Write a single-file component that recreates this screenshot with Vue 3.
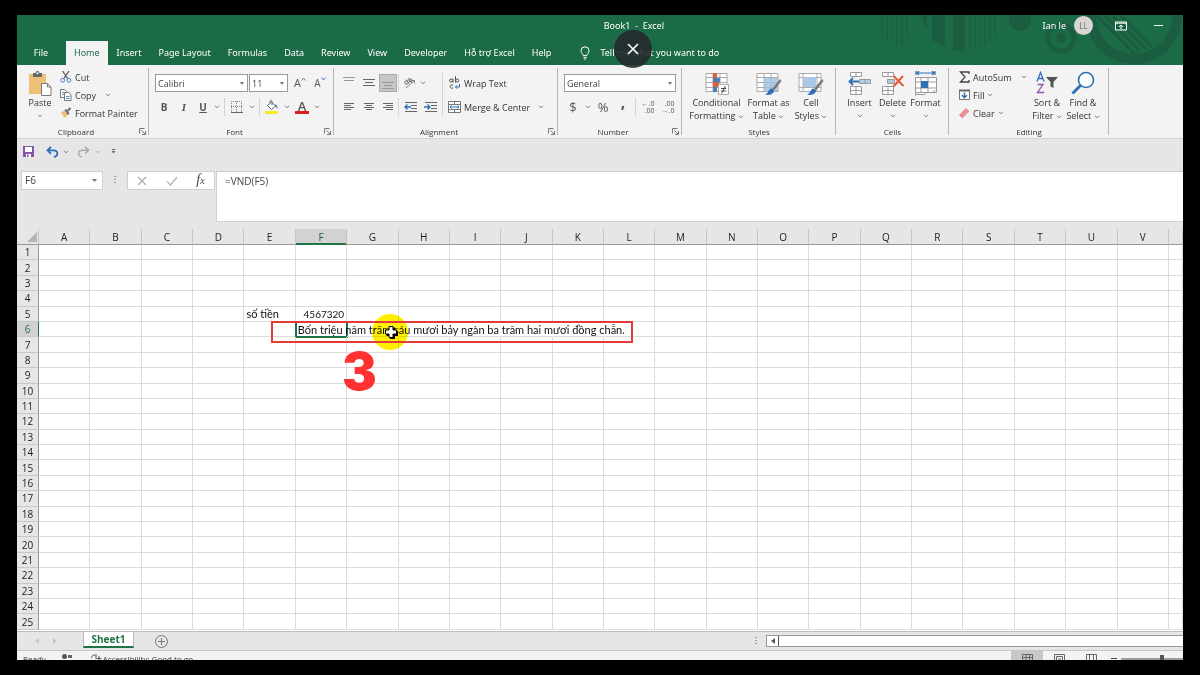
<script setup>
import { h, ref } from 'vue'

const tabs = ['Home', 'Insert', 'Page Layout', 'Formulas', 'Data', 'Review', 'View', 'Developer', 'Hỗ trợ Excel', 'Help']
const columns = 'ABCDEFGHIJKLMNOPQRSTUV'.split('')
const cells = {
  E5: 'số tiền',
  F5: '4567320',
  F6: 'Bốn triệu năm trăm sáu mươi bảy ngàn ba trăm hai mươi đồng chẵn.',
}
const spilled = ['G6', 'H6', 'I6', 'J6', 'K6']
const formula = ref('=VND(F5)')

const Chevron = () =>
  h('svg', { class: 'chevron', width: 6, height: 4, viewBox: '0 0 6 4' }, [
    h('path', { d: 'M1 .8 3 2.8 5 .8', fill: 'none', stroke: '#777', 'stroke-width': 1 }),
  ])
const Launcher = () =>
  h('svg', { width: 7, height: 7, viewBox: '0 0 7 7' }, [
    h('path', { d: 'M.5 5.5V.5h5M2.5 2.5l3.5 3.5M6.5 3v3.5H3', fill: 'none', stroke: '#777' }),
  ])
const Lines = (props) =>
  h('svg', { width: 12, height: 12, viewBox: '0 0 12 12' }, [
    h('path', { d: props.d, fill: 'none', stroke: props.color || '#666' }),
  ])
Lines.props = ['d', 'color']
</script>

<template>
  <div class="screen">
    <div class="window">
      <header class="top">
        <svg class="pattern" width="310" height="50" viewBox="0 0 310 50">
          <g fill="#1b5a40">
            <path d="M8 0h2v22H8zM13 0h2v27h-2zM18 0h2v25h-2zM23 0h2v29h-2zM28 0h2v32h-2zM33 0h2v22h-2z" opacity=".6" />
            <path d="M48 0h6v16zM59 0h13v32l-13-7zM80 0h12v36H80z" />
            <path d="M96 0h2v34h-2zM101 0h2v33h-2zM106 0h2v32h-2zM111 0h2v30h-2zM116 0h2v26h-2zM121 0h2v21h-2z" opacity=".7" />
            <circle cx="147" cy="5" r="11" /><circle cx="188" cy="23" r="5" />
          </g>
          <g fill="none" stroke="#1b5a40">
            <circle cx="188" cy="23" r="13" stroke-width="5" />
            <circle cx="261" cy="1" r="43" stroke-width="10" />
            <path d="M223 0l40 40M231 0l36 36M239 0l34 34M247 0l32 32" stroke-width="3" />
          </g>
        </svg>
        <div class="titlebar">
          <span></span>
          <span class="title">Book1&nbsp; -&nbsp; Excel</span>
          <div class="account">
            <span>Ian le</span>
            <span class="avatar">LL</span>
            <button aria-label="Ribbon display options">
              <svg width="12" height="10" viewBox="0 0 12 10"><path d="M.5 1h11v8H.5zM0 2.2h12M6 8.5V4.2M4 6l2-2 2 2" fill="none" stroke="#fff" /></svg>
            </button>
            <button aria-label="Minimize"><svg width="9" height="10" viewBox="0 0 9 10"><path d="M0 4.5h9" stroke="#fff" /></svg></button>
          </div>
        </div>
        <nav class="tabs">
          <button class="file">File</button>
          <button v-for="t in tabs" :key="t" :class="{ current: t === 'Home' }">{{ t }}</button>
          <button class="tell">
            <svg width="10" height="14" viewBox="0 0 10 14"><path d="M3.2 9.5C3 8 1 7.200 1 4.800a4 4 0 0 1 8 0C9 7.200 7 8 6.800 9.500zM3.300 11.300h3.400M3.800 13h2.400" fill="none" stroke="#fff" /></svg>
            Tell me what you want to do
          </button>
        </nav>
      </header>

      <div class="ribbon">
        <section class="group clipboard">
          <div class="body">
            <button class="big paste">
              <svg width="24" height="25" viewBox="0 0 24 25"><path d="M1 3h17v20H1z" fill="#eebf76" /><path d="M5 2h2.500a2 2 0 0 1 4 0H14v4H5z" fill="#696969" /><circle cx="9.500" cy="2.300" r="1" fill="#fff" /><path d="M13.500 12.500h6l3.500 3.500v8.500h-9.500z" fill="#fff" stroke="#777" /><path d="M19.500 12.500V16H23" fill="none" stroke="#777" /></svg>
              <span>Paste</span><Chevron />
            </button>
            <div class="stack">
              <button>
                <svg width="12" height="12" viewBox="0 0 12 12"><path d="M2.500 0 8 8M9 0 3.500 8" stroke="#5c5c5c" stroke-width="1.300" /><circle cx="2.700" cy="9.300" r="1.900" fill="none" stroke="#4b7fb8" /><circle cx="8.900" cy="9.300" r="1.900" fill="none" stroke="#4b7fb8" /></svg>
                Cut
              </button>
              <button>
                <svg width="12" height="12" viewBox="0 0 12 12"><path d="M.5.5h4l2 2v6h-6z" fill="#fff" stroke="#777" /><path d="M4.500 3.500h4.200l2.300 2.200v5.800H4.500z" fill="#fff" stroke="#777" /><path d="M2 3.500h2M2 5.500h2M6 7.500h3.500M6 9.500h3.500" stroke="#5b8cc0" /></svg>
                Copy <Chevron class="apart" />
              </button>
              <button>
                <svg width="12" height="12" viewBox="0 0 12 12"><path d="M1 5.500 4.500 3 8 8l-3.500 3z" fill="#eebf76" /><path d="M4.500 3 6 2l3.500 4.500L8 8z" fill="#666" /><path d="m7.500 4 3-3" stroke="#666" stroke-width="2" /></svg>
                Format Painter
              </button>
            </div>
          </div>
          <footer>Clipboard<button aria-label="Clipboard settings"><Launcher /></button></footer>
        </section>

        <section class="group font">
          <div class="body rows">
            <div class="row">
              <label class="combo family"><select aria-label="Font"><option>Calibri</option></select></label>
              <label class="combo size"><select aria-label="Font size"><option>11</option></select></label>
              <button class="tool grow">A<svg width="5" height="4" viewBox="0 0 5 4"><path d="M.5 3.500 2.500 1l2 2.500" fill="none" stroke="#4b7fb8" /></svg></button>
              <button class="tool shrink">A<svg width="5" height="4" viewBox="0 0 5 4"><path d="M.5.5 2.500 3l2-2.500" fill="none" stroke="#4b7fb8" /></svg></button>
            </div>
            <div class="row">
              <button class="tool"><b>B</b></button>
              <button class="tool"><b><i class="italic">I</i></b></button>
              <button class="tool narrow"><b><u>U</u></b></button>
              <button class="drop" aria-label="Underline styles"><Chevron /></button>
              <i class="sep"></i>
              <button class="tool" aria-label="Borders">
                <svg width="12" height="12" viewBox="0 0 12 12"><path d="M.5 0v11M5.500 0v11M10.500 0v11M0 .5h11M0 5.500h11" stroke="#888" stroke-dasharray="1 1" /><path d="M0 11.500h12" stroke="#666" /></svg>
              </button>
              <button class="drop" aria-label="More borders"><Chevron /></button>
              <i class="sep"></i>
              <button class="tool" aria-label="Fill color">
                <svg width="14" height="14" viewBox="0 0 14 14"><path d="m2.500 5.500 4-3.500 4 4-4 3.500zM5 3V1.500a1 1 0 0 1 2 0V5" fill="#fff" stroke="#666" /><path d="M10 4.500c2 0 2.500 1.500 2.500 4.500-1-1-1.500-2-2.500-3z" fill="#4b7fb8" /><path d="M0 11h13v3H0z" fill="#f5ec1d" /></svg>
              </button>
              <button class="drop" aria-label="More fill colors"><Chevron /></button>
              <button class="tool fontcolor">A</button>
              <button class="drop" aria-label="More font colors"><Chevron /></button>
            </div>
          </div>
          <footer>Font<button aria-label="Font settings"><Launcher /></button></footer>
        </section>

        <section class="group alignment">
          <div class="body split">
            <div class="rows">
              <div class="row">
                <button class="tool" aria-label="Top align"><Lines d="M0 .5h12M1 3.500h10" color="#999" /></button>
                <button class="tool" aria-label="Middle align"><Lines d="M0 2.500h12M2 5.500h8M0 8.500h12" /></button>
                <button class="tool pressed" aria-label="Bottom align"><Lines d="M0 5.500h12M2 8.500h8M0 11.500h12" color="#999" /></button>
                <i class="sep"></i>
                <button class="tool narrow" aria-label="Orientation">
                  <svg width="13" height="12" viewBox="0 0 13 12"><path d="m3 11 8.500-7.500M8.500 3.500h3v3" fill="none" stroke="#888" /><circle cx="3.500" cy="5.500" r="1.700" fill="none" stroke="#666" /><path d="m3 2.500 3 4M5 1l3.500 4.500" stroke="#666" /><circle cx="7.600" cy="3.400" r="1.500" fill="none" stroke="#666" /></svg>
                </button>
                <button class="drop" aria-label="More orientations"><Chevron /></button>
              </div>
              <div class="row">
                <button class="tool" aria-label="Align left"><Lines d="M1 2.500h10M1 4.500h7M1 6.500h10M1 8.500h7" /></button>
                <button class="tool" aria-label="Center"><Lines d="M1 2.500h10M3 4.500h6M1 6.500h10M3 8.500h6" /></button>
                <button class="tool narrow" aria-label="Align right"><Lines d="M1 2.500h10M4 4.500h7M1 6.500h10M4 8.500h7" /></button>
                <i class="sep"></i>
                <button class="tool" aria-label="Decrease indent">
                  <svg width="13" height="12" viewBox="0 0 13 12"><path d="M1 1.500h12M7 4.500h6M7 7.500h6M1 10.500h12" stroke="#666" /><path d="M7 6H1m2.500-2.500L1 6l2.500 2.500" fill="none" stroke="#2f6fb5" stroke-width="1.300" /></svg>
                </button>
                <button class="tool" aria-label="Increase indent">
                  <svg width="13" height="12" viewBox="0 0 13 12"><path d="M1 1.500h12M7 4.500h6M7 7.500h6M1 10.500h12" stroke="#666" /><path d="M0 6h6M3.500 3.500 6 6 3.500 8.500" fill="none" stroke="#2f6fb5" stroke-width="1.300" /></svg>
                </button>
              </div>
            </div>
            <i class="sep tall"></i>
            <div class="rows">
              <div class="row">
                <button class="wide">
                  <svg class="wrapicon" width="13" height="14" viewBox="0 0 13 14"><circle cx="3" cy="4.500" r="1.500" fill="none" stroke="#555" /><path d="M5 2.500v4M7.500 0v6.500" stroke="#555" /><circle cx="9.300" cy="4.500" r="1.500" fill="none" stroke="#555" /><path d="M5 9.300a1.700 1.700 0 1 0 0 2.600" fill="none" stroke="#555" /><path d="M11.500 8v3H7.500M9 9.300 7.500 11 9 12.700" fill="none" stroke="#2f6fb5" /></svg>
                  Wrap Text
                </button>
              </div>
              <div class="row">
                <button class="wide">
                  <svg width="13" height="12" viewBox="0 0 13 12"><path d="M.5.5h12v11H.5zM.5 3.500h12M.5 8.500h12M6.500.5v3M6.500 8.500v3" fill="#fff" stroke="#777" /><path d="M2 6h9M3.500 4.500 2 6l1.500 1.500M9.500 4.500 11 6 9.500 7.500" fill="none" stroke="#2f6fb5" /></svg>
                  Merge &amp; Center
                </button>
                <button class="drop" aria-label="More merge options"><Chevron /></button>
              </div>
            </div>
          </div>
          <footer>Alignment<button aria-label="Alignment settings"><Launcher /></button></footer>
        </section>

        <section class="group number">
          <div class="body rows">
            <div class="row">
              <label class="combo format"><select aria-label="Number format"><option>General</option></select></label>
            </div>
            <div class="row">
              <button class="tool glyph">$</button>
              <button class="drop" aria-label="More currencies"><Chevron /></button>
              <button class="tool glyph">%</button>
              <button class="tool comma">,</button>
              <i class="sep"></i>
              <button class="tool decimal" aria-label="Increase decimal"><span><em>←</em>.0<br />.00</span></button>
              <button class="tool decimal" aria-label="Decrease decimal"><span>.00<br /><em>→</em>.0</span></button>
            </div>
          </div>
          <footer>Number<button aria-label="Number settings"><Launcher /></button></footer>
        </section>

        <section class="group styles">
          <div class="body">
            <button class="big w55">
              <svg width="24" height="25" viewBox="0 0 24 25"><path d="M1 2.500h21v18H1zM1 6.500h21M1 11.500h21M1 16.500h21M8 2v18M15 2v18" fill="#fff" stroke="#aaa" /><path d="M8 2h4v5H8zM8 11h6v5H8z" fill="#d9603b" /><path d="M8 7h7v4H8zM8 16h4v5H8z" fill="#4b7fb8" /><path d="M13.500 13.500h10v10h-10z" fill="#fff" stroke="#aaa" /><path d="M16 17.500h5M16 20h5M20.500 15l-4 7.500" stroke="#444" /></svg>
              <span>Conditional<br />Formatting <Chevron /></span>
            </button>
            <button class="big w47">
              <svg width="26" height="25" viewBox="0 0 26 25"><path d="M1 2.500h21v18H1zM1 6.500h21M1 11.500h21M1 16.500h21M8 2v18M15 2v18" fill="#fff" stroke="#aaa" /><path d="M8 7h14v13H8z" fill="#9ebfe0" opacity=".8" /><path d="m24 8-8 10 2 1.500L25.500 10z" fill="#777" /><path d="M15.500 17.500c-3 0-3 5-6.500 6 5 1.500 9-1 9-4z" fill="#2f6fb5" /></svg>
              <span>Format as<br />Table <Chevron /></span>
            </button>
            <button class="big w36">
              <svg width="26" height="25" viewBox="0 0 26 25"><path d="M1 2.500h22v18H1zM1 6.500h22M1 16.500h22M5 2v18M19 2v18" fill="#fff" stroke="#aaa" /><path d="M5 6h13v10H5z" fill="#a9c8e6" /><path d="m24 8-8 10 2 1.500L25.500 10z" fill="#777" /><path d="M15.500 17.500c-3 0-3 5-6.500 6 5 1.500 9-1 9-4z" fill="#2f6fb5" /></svg>
              <span>Cell<br />Styles <Chevron /></span>
            </button>
          </div>
          <footer>Styles</footer>
        </section>

        <section class="group cells">
          <div class="body">
            <button class="big w33">
              <svg width="24" height="25" viewBox="0 0 24 25"><path d="M2.500 1.500h11v4h-11zM8 1.500v4M2.500 15.500h11v8h-11zM2.500 19.500h11M8 15.500v8" fill="#fff" stroke="#999" /><path d="M11.500 8.500h11v4h-11zM17 8.500v4" fill="#b3cde6" stroke="#999" /><path d="M11 10.500H1.500M5 7l-3.500 3.500L5 14" fill="none" stroke="#2f6fb5" stroke-width="1.800" /></svg>
              <span>Insert</span><Chevron />
            </button>
            <button class="big w33">
              <svg width="24" height="25" viewBox="0 0 24 25"><path d="M1.500 1.500h11v4h-11zM7 1.500v4M1.500 15.500h11v8h-11zM1.500 19.500h11M7 15.500v8" fill="#fff" stroke="#999" /><path d="M6.500 8.500h7v4h-7z" fill="#b5c4d2" stroke="#999" /><path d="m12.500 5 10 10M22 5 12.500 15.500" stroke="#e0573a" stroke-width="2" /></svg>
              <span>Delete</span><Chevron />
            </button>
            <button class="big w33">
              <svg width="24" height="25" viewBox="0 0 24 25"><path d="M3 2h17M5 0 3 2l2 2M18 0l2 2-2 2M2 0v4M21 0v4" fill="none" stroke="#2f6fb5" stroke-width="1.200" /><path d="M1.500 6.500h21v15h-21zM1.500 11h21M1.500 17h21M7 6.500v15M14 6.500v15M1.500 21.500v3M1.500 23.500h9l2-2h6l3-2" fill="#fff" stroke="#999" /><path d="M7 10h7v7H7z" fill="#2f6fb5" /></svg>
              <span>Format</span><Chevron />
            </button>
          </div>
          <footer>Cells</footer>
        </section>

        <section class="group editing">
          <div class="body">
            <div class="stack">
              <button><svg width="11" height="12" viewBox="0 0 11 12"><path d="M10 3V1H1.500l4.500 5-4.500 5H10V9" fill="none" stroke="#444" stroke-width="1.300" /></svg>AutoSum <Chevron class="apart" /></button>
              <button><svg width="11" height="12" viewBox="0 0 11 12"><path d="M.5 1.500h10v9H.5z" fill="#fff" stroke="#777" /><path d="M0 1.500h11" stroke="#666" stroke-width="2" /><path d="M5.500 3.500v5M3 6.200 5.500 8.700 8 6.200" fill="none" stroke="#2f6fb5" stroke-width="1.500" /></svg>Fill <Chevron /></button>
              <button><svg width="11" height="12" viewBox="0 0 11 12"><path d="m1 7 6-6 3.500 3.200-6 6z" fill="#ee8f98" /><path d="M1 7l3.500 3.200L3.400 11 0 8z" fill="#d8707b" /></svg>Clear <Chevron /></button>
            </div>
            <button class="big w36">
              <svg width="24" height="25" viewBox="0 0 24 25"><path d="m2 10.500 3.500-9 3.500 9M3 7.500h5" fill="none" stroke="#2f6fb5" stroke-width="1.300" /><path d="M2.500 13.500H8L2.500 21.500H9" fill="none" stroke="#8d4fa8" stroke-width="1.300" /><path d="M11 6h12l-4.500 5v6l-3-1.500V11z" fill="#555" /></svg>
              <span>Sort &amp;<br />Filter <Chevron /></span>
            </button>
            <button class="big w36">
              <svg width="24" height="25" viewBox="0 0 24 25"><circle cx="15" cy="9" r="7.500" fill="#fff" stroke="#2f6fb5" stroke-width="1.600" /><path d="m9.500 14.500-8 8" stroke="#2f6fb5" stroke-width="3" /></svg>
              <span>Find &amp;<br />Select <Chevron /></span>
            </button>
          </div>
          <footer>Editing</footer>
        </section>
      </div>

      <div class="quick">
        <button aria-label="Save"><svg width="11" height="11" viewBox="0 0 11 11"><path d="M0 0h11v11H0z" fill="#8755a5" /><path d="M2 1h7v5H2zM3 8h5v3H3z" fill="#fff" /><path d="M4 8.500h1.500V11H4z" fill="#8755a5" /></svg></button>
        <button class="undo" aria-label="Undo"><svg width="13" height="12" viewBox="0 0 13 12"><path d="M5 .8 1.500 4.300 5 7.800M2 4.300h5.500c5 0 5 6 .5 6.700" fill="none" stroke="#2f6fb5" stroke-width="1.800" /></svg></button>
        <button aria-label="Undo history"><Chevron /></button>
        <button class="redo" aria-label="Redo"><svg width="13" height="12" viewBox="0 0 13 12"><path d="M8 .8l3.500 3.500L8 7.800M11 4.300H5.500c-5 0-5 6-.5 6.700" fill="none" stroke="#aaa" stroke-width="1.500" /></svg></button>
        <button class="faded" aria-label="Redo history"><Chevron /></button>
        <button class="custom" aria-label="Customize toolbar"><svg width="5" height="5" viewBox="0 0 5 5"><path d="M1 .5h3" stroke="#666" /><path d="M.5 2h4l-2 2.500z" fill="#666" /></svg></button>
      </div>

      <div class="formulabar">
        <div class="namebox"><input aria-label="Name box" value="F6" /><svg width="5" height="3" viewBox="0 0 5 3"><path d="M0 0h5L2.500 3z" fill="#777" /></svg></div>
        <span class="dots"></span>
        <div class="actions">
          <button aria-label="Cancel"><svg width="10" height="10" viewBox="0 0 10 10"><path d="m1 1 8 8M9 1 1 9" stroke="#aaa" stroke-width="1.200" /></svg></button>
          <button aria-label="Enter"><svg width="12" height="10" viewBox="0 0 12 10"><path d="m1 5.500 3.500 3.500L11 1" fill="none" stroke="#bbb" stroke-width="1.500" /></svg></button>
          <button class="fx" aria-label="Insert function">f<small>x</small></button>
        </div>
        <textarea v-model="formula" aria-label="Formula"></textarea>
      </div>

      <main class="sheet">
        <table>
          <colgroup><col class="rowcol" /><col v-for="c in columns" :key="c" /><col class="partial" /></colgroup>
          <thead>
            <tr>
              <th class="corner"><svg width="10" height="10" viewBox="0 0 10 10"><path d="M10 0v10H0z" fill="#b4b4b4" /></svg></th>
              <th v-for="c in columns" :key="c" :class="{ active: c === 'F' }">{{ c }}</th>
              <th></th>
            </tr>
          </thead>
          <tbody>
            <tr v-for="r in 25" :key="r">
              <th :class="{ active: r === 6 }">{{ r }}</th>
              <td
                v-for="c in columns"
                :key="c"
                :class="{ num: c + r === 'F5', selected: c + r === 'F6', spill: spilled.includes(c + r) }"
              ><span v-if="cells[c + r]">{{ cells[c + r] }}</span></td>
              <td></td>
            </tr>
          </tbody>
        </table>
        <span class="spot"></span>
        <svg class="cursor" width="15" height="15" viewBox="0 0 15 15"><path d="M6 2.500h5v3.500h3v5h-3v3H6v-3H2.500V6H6z" fill="#000" /><path d="M5 1.500h4v3.500h3.500v4H9v3.500H5V9H1.500V5H5z" fill="#fff" stroke="#000" /></svg>
        <span class="frame"></span>
        <span class="step">3</span>
      </main>

      <div class="sheetbar">
        <button aria-label="Previous sheet"><svg width="4" height="6" viewBox="0 0 4 6"><path d="M4 0v6L0 3z" fill="#c4c4c4" /></svg></button>
        <button aria-label="Next sheet"><svg width="4" height="6" viewBox="0 0 4 6"><path d="M0 0v6l4-3z" fill="#c4c4c4" /></svg></button>
        <button class="sheettab">Sheet1</button>
        <button class="add" aria-label="New sheet"><svg width="13" height="13" viewBox="0 0 13 13"><path d="M6.500 3v7M3 6.500h7" stroke="#777" /><circle cx="6.500" cy="6.500" r="6" fill="none" stroke="#777" /></svg></button>
        <span class="dots"></span>
        <div class="scroll"><button aria-label="Scroll left"><svg width="4" height="6" viewBox="0 0 4 6"><path d="M4 0v6L0 3z" fill="#555" /></svg></button></div>
      </div>

      <div class="status">
        <span>Ready</span>
        <svg width="10" height="10" viewBox="0 0 10 10"><circle cx="2.500" cy="2.500" r="2.500" fill="#555" /><path d="M6 1h4v3H6zM0 6h10v4H0z" fill="#666" /></svg>
        <svg width="12" height="12" viewBox="0 0 12 12"><path d="M4 1a5 5 0 0 0 1 10M5 0v5M8 2v5M5.500 4.500h5" fill="none" stroke="#555" /></svg>
        <span class="access">Accessibility: Good to go</span>
        <button class="on" aria-label="Normal view"><svg width="11" height="10" viewBox="0 0 11 10"><path d="M.5.5h10v9H.5zM0 3.500h11M0 6.500h11M4 0v10M7.500 0v10" fill="none" stroke="#666" /></svg></button>
        <button aria-label="Page layout view"><svg width="11" height="10" viewBox="0 0 11 10"><path d="M.5.5h10v9H.5zM2.500 9.500v-7h6v7M4 5h3" fill="none" stroke="#666" /></svg></button>
        <button aria-label="Page break view"><svg width="11" height="10" viewBox="0 0 11 10"><path d="M.5 9.500v-9h10v9M3.500 0v10M7.500 0v10" fill="none" stroke="#666" /></svg></button>
        <svg class="zoombar" width="72" height="10" viewBox="0 0 72 10"><path d="M0 4.500h6M10 5h62" stroke="#444" /><path d="M49 1h4v8h-4z" fill="#555" /></svg>
      </div>

      <button class="close" aria-label="Close"><svg width="12" height="12" viewBox="0 0 12 12"><path d="m1 1 10 10M11 1 1 11" stroke="#fff" stroke-width="1.600" /></svg></button>
    </div>
  </div>
</template>

<style>
body { background: #000; }
</style>

<style scoped>
* { box-sizing: border-box; }
.screen { height: 100vh; padding: 15px 17px; background: #000; font: 9px/13px "Open Sans", "Noto Sans", sans-serif; color: #333; }
.window { position: relative; height: 100%; display: flex; flex-direction: column; background: #e6e6e6; overflow: hidden; }
button { font: inherit; color: inherit; background: none; border: 0; padding: 0; margin: 0; white-space: nowrap; }
svg { flex: none; display: block; }

.top { position: relative; flex: none; background: #1c6b47; color: #fff; font-family: "Noto Sans", sans-serif; }
.pattern { position: absolute; right: 0; top: 0; opacity: .8; }
.titlebar { position: relative; display: grid; grid-template-columns: 1fr auto 519px; align-items: center; height: 21px; margin-bottom: 5px; }
.account { display: flex; align-items: center; justify-content: flex-end; padding-right: 20px; }
.avatar { width: 19px; height: 19px; line-height: 19px; margin: 0 22px 0 8px; border-radius: 50%; background: #d9d5d5; color: #777; text-align: center; font-size: 8px; }
.account button + button { margin-left: 27px; }
.tabs { position: relative; display: flex; height: 24px; }
.tabs button { padding: 0 8px 1px; margin-right: 1px; }
.tabs .file { width: 48px; }
.tabs .current { background: #f3f3f3; color: #1c6b47; }
.tabs .tell { display: flex; align-items: center; gap: 10px; margin-left: 12px; }

.ribbon { flex: none; display: flex; background: #f3f3f3; border-bottom: 1px solid #d2d2d2; }
.group { position: relative; display: flex; flex-direction: column; height: 73px; }
.group::after { content: ""; position: absolute; right: 0; top: 3px; bottom: 3px; width: 1px; background: #b8b8b8; }
.clipboard { width: 132px; }
.font { width: 185px; }
.alignment { width: 224px; }
.number { width: 124px; }
.styles { width: 154px; }
.cells { width: 113px; }
.editing { width: 160px; }
.body { flex: 1; display: flex; }
.group footer { display: flex; justify-content: center; align-items: center; height: 13px; font-size: 8px; padding-right: 14px; position: relative; }
.group footer button { position: absolute; right: 3px; top: 3px; }
.styles footer, .cells footer, .editing footer { padding-right: 0; }
.big { display: flex; flex-direction: column; align-items: center; padding-top: 6px; align-self: flex-start; text-align: center; }
.big > .chevron { margin-top: 5px; }
.big span .chevron { display: inline-block; vertical-align: middle; }
.paste { width: 46px; }
.w55 { width: 55px; }
.w47 { width: 49px; }
.w36 { width: 36px; }
.w33 { width: 33px; }
.styles .body, .cells .body { justify-content: center; }
.stack { display: flex; flex-direction: column; padding-top: 3px; }
.stack button { display: flex; align-items: center; gap: 3px; height: 18px; }
.clipboard .stack { margin-left: -3px; }
.apart { margin-left: 6px; }
.editing .stack { width: 80px; padding-left: 10px; }
.rows { display: flex; flex-direction: column; gap: 6px; padding-top: 9px; }
.body.rows { padding-left: 5px; }
.row { display: flex; align-items: center; height: 18px; }
.split { padding-left: 5px; }
.split .rows:first-child { width: 103px; }
.tool { width: 20px; height: 18px; display: flex; align-items: center; justify-content: center; font-size: 10px; color: #555; }
.row .narrow { width: 18px; }
.pressed { width: 18px; background: #c6c6c6; border: 1px solid #aaa; }
.drop { width: 10px; height: 18px; display: flex; align-items: center; justify-content: center; }
.sep { width: 1px; height: 18px; background: #d4d4d4; margin: 0 2px; }
.split .sep { margin: 0 1px; }
.split .tall { height: 44px; margin: 8px 5px 0 0; }
.italic { font-family: "Liberation Serif", serif; font-style: italic; font-size: 11px; }
.combo { display: flex; position: relative; height: 18px; margin-left: 1px; }
.combo::after { content: ""; position: absolute; right: 4px; top: 8px; border: 2px solid transparent; border-top: 3px solid #777; border-bottom: 0; }
select { appearance: none; width: 100%; height: 18px; border: 1px solid #999; border-radius: 0; background: #fff; color: #444; font: inherit; padding: 0 2px; }
.family { width: 93px; }
.size { width: 39px; }
.format { width: 112px; }
.grow, .shrink { align-items: flex-start; line-height: 18px; }
.grow { margin-left: 2px; font-size: 11px; }
.grow svg, .shrink svg { margin-top: 3px; }
.fontcolor { font-size: 13px; font-weight: 600; line-height: 12px; width: 14px; margin: 0 3px; height: 14px; border-bottom: 3px solid #d8201f; }
.wide { display: flex; align-items: center; gap: 3px; }
.alignment .wide + .drop { margin-left: 6px; }
.glyph { font-size: 13px; }
.comma { font-size: 16px; font-weight: 700; line-height: 8px; align-items: flex-start; }
.decimal { font-size: 7px; line-height: 7px; text-align: right; }
.decimal em { color: #2f6fb5; font-style: normal; font-weight: 700; }

.quick { flex: none; display: flex; align-items: center; height: 26px; padding: 0 0 1px 6px; }
.undo { margin: 0 4px 0 12px; }
.redo { margin: 0 5px 0 8px; }
.faded { opacity: .5; }
.custom { margin-left: 10px; }

.formulabar { flex: none; display: flex; align-items: flex-start; height: 51px; margin-top: 6px; padding-left: 4px; }
.namebox { display: flex; align-items: center; width: 82px; height: 19px; background: #fff; border: 1px solid #d0d0d0; padding-right: 5px; }
.namebox input { flex: 1; min-width: 0; border: 0; padding: 0 3px; font: inherit; font-size: 10px; color: #444; background: none; }
.dots { width: 2px; height: 9px; background: repeating-linear-gradient(#999 0 1px, transparent 1px 3px); }
.formulabar .dots { margin: 5px 11px 0; }
.actions { display: flex; align-items: center; justify-content: space-around; width: 88px; height: 19px; background: #fff; border: 1px solid #d0d0d0; margin-right: 1px; }
.fx { font: italic 14px/14px "Liberation Serif", serif; color: #444; }
.fx small { font-size: 10px; }
textarea { flex: 1; align-self: stretch; resize: none; border: 1px solid #d0d0d0; border-right: 0; background: #fff; font: inherit; font-size: 10px; padding: 3px 8px; color: #444; border-radius: 0; outline: 0; }

.sheet { position: relative; flex: 1; min-height: 0; background: #fff; margin-top: 7px; overflow: hidden; border-bottom: 1px solid #bbb; }
table { width: 100%; height: calc(100% - 1px); table-layout: fixed; border-collapse: separate; border-spacing: 0; }
.rowcol { width: 22px; }
.partial { width: 14px; }
th { background: #e6e6e6; font-weight: 400; font-size: 10px; line-height: 12px; padding: 0; color: #222; text-align: center; border-right: 1px solid #c4c4c4; }
thead th { height: 16px; border-bottom: 1px solid #999; }
tbody th { border-bottom: 1px solid #c8c8c8; border-right-color: #999; }
.corner svg { margin-left: 10px; }
thead .active { background: #d2d2d2; color: #1c5a45; border-bottom-color: #217346; box-shadow: inset 0 -1px #217346; }
tbody .active { background: #d2d2d2; color: #217346; border-right-color: #217346; }
td { padding: 0 2px; border-right: 1px solid #dcdcdc; border-bottom: 1px solid #dcdcdc; font: 11px/12px Lato, "Open Sans", sans-serif; color: #111; white-space: nowrap; }
.num { text-align: right; font-size: 10px; }
.spill { border-right-color: transparent; }
.selected { border: 0; box-shadow: inset 0 0 0 1px #217346, 0 0 0 1px #217346; }
.spot { position: absolute; left: 355px; top: 85px; width: 36px; height: 36px; border-radius: 50%; background: #ffee00; mix-blend-mode: multiply; }
.cursor { position: absolute; left: 367px; top: 96px; }
.frame { position: absolute; left: 254px; top: 92px; width: 362px; height: 22px; border: 2px solid #e33a3a; }
.step { position: absolute; left: 325px; top: 115px; font: 900 52px/56px Inter, sans-serif; color: #ff3131; }

.sheetbar { flex: none; display: flex; align-items: center; height: 19px; border-bottom: 1px solid #c6c6c6; padding-left: 18px; }
.sheetbar > button + button { margin-left: 14px; }
.sheetbar .sheettab { margin-left: 26px; align-self: flex-start; width: 51px; height: 16px; line-height: 14px; background: #fff; border: 1px solid #bbb; border-top: 0; border-bottom: 2px solid #217346; color: #217346; font-size: 10px; font-weight: 700; }
.sheetbar .add { margin-left: 21px; }
.sheetbar .dots { margin-left: auto; }
.scroll { width: 417px; height: 12px; margin-left: 9px; background: #fff; border: 1px solid #999; border-right: 0; }
.scroll button { display: flex; align-items: center; justify-content: center; width: 12px; height: 10px; border-right: 1px solid #555; }
.status { flex: none; display: flex; align-items: flex-start; height: 9px; background: #f3f3f3; overflow: hidden; padding-left: 6px; font-size: 8px; line-height: 16px; }
.status svg { margin-top: 3px; }
.status > span + svg { margin: 3px 19px 0 16px; }
.access { margin-right: auto; }
.status button { width: 32px; height: 9px; display: flex; justify-content: center; }
.status .on { background: #c8c8c8; }
.status .zoombar { margin-left: 4px; margin-top: 3px; }

.close { position: absolute; left: 597px; top: 15px; width: 38px; height: 38px; border-radius: 50%; background: rgba(37, 42, 44, .9); display: flex; align-items: center; justify-content: center; }
</style>
